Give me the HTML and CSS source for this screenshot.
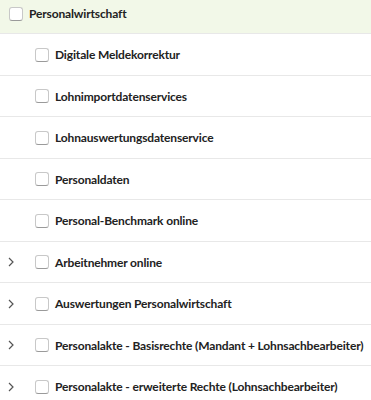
FILE: index.html
```html
<!DOCTYPE html>
<html lang="de">
<head>
    <meta charset="UTF-8">
    <meta name="viewport" content="width=device-width, initial-scale=1.0">
    <title>Personalwirtschaft</title>
    <link rel="stylesheet" href="styles.css">
</head>
<body>
    <ul class="tree">
        <li class="node node-root">
            <span class="toggle"></span>
            <span class="check"></span>
            <span class="label">Personalwirtschaft</span>
        </li>
        <li class="node">
            <span class="toggle"></span>
            <span class="check"></span>
            <span class="label">Digitale Meldekorrektur</span>
        </li>
        <li class="node">
            <span class="toggle"></span>
            <span class="check"></span>
            <span class="label">Lohnimportdatenservices</span>
        </li>
        <li class="node">
            <span class="toggle"></span>
            <span class="check"></span>
            <span class="label">Lohnauswertungsdatenservice</span>
        </li>
        <li class="node">
            <span class="toggle"></span>
            <span class="check"></span>
            <span class="label">Personaldaten</span>
        </li>
        <li class="node">
            <span class="toggle"></span>
            <span class="check"></span>
            <span class="label">Personal-Benchmark online</span>
        </li>
        <li class="node">
            <span class="toggle"><svg viewBox="0 0 6 10" width="6" height="10"><path d="M1 1 L5 5 L1 9" fill="none" stroke="#555" stroke-width="1.2"/></svg></span>
            <span class="check"></span>
            <span class="label">Arbeitnehmer online</span>
        </li>
        <li class="node">
            <span class="toggle"><svg viewBox="0 0 6 10" width="6" height="10"><path d="M1 1 L5 5 L1 9" fill="none" stroke="#555" stroke-width="1.2"/></svg></span>
            <span class="check"></span>
            <span class="label">Auswertungen Personalwirtschaft</span>
        </li>
        <li class="node">
            <span class="toggle"><svg viewBox="0 0 6 10" width="6" height="10"><path d="M1 1 L5 5 L1 9" fill="none" stroke="#555" stroke-width="1.2"/></svg></span>
            <span class="check"></span>
            <span class="label">Personalakte - Basisrechte (Mandant + Lohnsachbearbeiter)</span>
        </li>
        <li class="node">
            <span class="toggle"><svg viewBox="0 0 6 10" width="6" height="10"><path d="M1 1 L5 5 L1 9" fill="none" stroke="#555" stroke-width="1.2"/></svg></span>
            <span class="check"></span>
            <span class="label">Personalakte - erweiterte Rechte (Lohnsachbearbeiter)</span>
        </li>
    </ul>
</body>
</html>
```

FILE: styles.css
```css
body {
    margin: 0;
    padding: 0;
    font-family: Lato, "Noto Sans", sans-serif;
    color: #222;
    background-color: #fff;
}
.tree {
    list-style: none;
    margin: 0;
    padding: 0;
}
.node {
    display: flex;
    align-items: center;
    box-sizing: border-box;
    height: 41.5px;
    padding-top: 1px;
    border-bottom: 1px solid #e8e8e8;
}
.node-root {
    height: 34px;
    padding-top: 0;
    padding-bottom: 6px;
    padding-left: 9px;
    background-color: #f2f8e8;
}
.node-root .toggle {
    display: none;
}
.toggle {
    display: flex;
    align-items: center;
    justify-content: center;
    flex-shrink: 0;
    width: 22px;
    height: 14px;
    margin-right: 13px;
}
.check {
    flex-shrink: 0;
    width: 12px;
    height: 12px;
    margin-right: 6px;
    border: 1px solid #c8c8c8;
    border-bottom-color: #9a9a9a;
    border-radius: 3px;
    background-color: #fff;
}
.label {
    font-size: 12px;
    font-weight: 700;
    letter-spacing: -0.15px;
    white-space: nowrap;
}
```
